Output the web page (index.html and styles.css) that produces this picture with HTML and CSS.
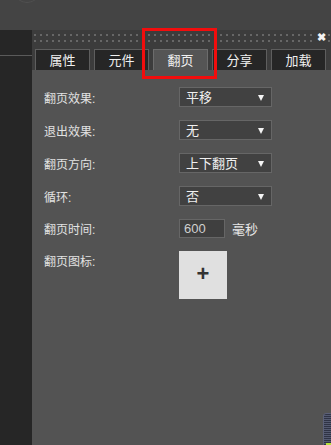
FILE: index.html
```html
<!DOCTYPE html>
<html lang="zh-CN">
<head>
  <meta charset="UTF-8">
  <title>翻页设置</title>
  <link rel="stylesheet" href="styles.css">
</head>
<body>
  <!-- 上部のツールバー -->
  <div class="topbar"><span class="knob"></span></div>

  <div class="main">
    <!-- 左のサイドバー -->
    <div class="sidebar"><div class="side-line"></div></div>

    <!-- 設定パネル -->
    <div class="panel">
      <div class="panel-head">
        <div class="dots"></div>
        <div class="dots"></div>
        <span class="close">✖</span>
      </div>

      <div class="tabs">
        <div class="tab">属性</div>
        <div class="tab">元件</div>
        <div class="tab active">翻页</div>
        <div class="tab">分享</div>
        <div class="tab">加载</div>
      </div>
      <div class="highlight"></div>

      <div class="form">
        <div class="row">
          <label>翻页效果:</label>
          <div class="select">平移</div>
        </div>
        <div class="row">
          <label>退出效果:</label>
          <div class="select">无</div>
        </div>
        <div class="row">
          <label>翻页方向:</label>
          <div class="select">上下翻页</div>
        </div>
        <div class="row">
          <label>循环:</label>
          <div class="select">否</div>
        </div>
        <div class="row">
          <label>翻页时间:</label>
          <div class="number">600</div>
          <span class="unit">毫秒</span>
        </div>
        <div class="row top">
          <label>翻页图标:</label>
          <div class="icon-box">+</div>
        </div>
      </div>
    </div>
  </div>

  <div class="mini-bar"></div>
</body>
</html>
```

FILE: styles.css
```css
/* 全体 */
body {
  margin: 0;
  width: 331px;
  height: 445px;
  overflow: hidden;
  background: #444444;
  font-family: "Liberation Sans", "Noto Sans CJK SC", sans-serif;
  color: #e2e2e2;
  position: relative;
}

/* 上部ツールバー */
.topbar {
  height: 30px;
  background: #444444;
  position: relative;
}

.knob {
  position: absolute;
  left: 16px;
  top: -16px;
  width: 22px;
  height: 18px;
  border-radius: 50%;
  border-bottom: 1px solid #515151;
}

.main {
  display: flex;
  height: 415px;
}

/* サイドバー */
.sidebar {
  width: 32px;
  background: #262626;
}

.side-line {
  margin-top: 25px;
  height: 1px;
  background: #5a5a5a;
}

/* パネル */
.panel {
  flex: 1;
  background: #535353;
  position: relative;
}

.panel-head {
  height: 15px;
  box-sizing: border-box;
  padding: 4px 0 0 2px;
  background: #3c3c3c;
  display: flex;
  flex-direction: column;
  gap: 4px;
  position: relative;
}

.dots {
  height: 2px;
  background-image: linear-gradient(90deg, #676767 0 2px, transparent 2px);
  background-size: 6px 2px;
}

.close {
  position: absolute;
  right: 4px;
  top: 1px;
  width: 12px;
  height: 13px;
  background: #3c3c3c;
  color: #f2f2f2;
  font-size: 11px;
  line-height: 13px;
  text-align: center;
  font-weight: bold;
}

/* タブ */
.tabs {
  display: flex;
  gap: 4px;
  padding: 4px 5px 0 3px;
  background: #3c3c3c;
  height: 21px;
}

.tab {
  width: 53px;
  height: 20px;
  border: 1px solid #5e5e5e;
  border-bottom: none;
  background: #262626;
  color: #f0f0f0;
  font-size: 13px;
  line-height: 21px;
  text-align: center;
}

.tab.active {
  background: #555555;
  border-color: #6c6c6c;
}

.highlight {
  position: absolute;
  left: 110px;
  top: -2px;
  width: 69px;
  height: 45px;
  border: 3px solid #f20d0d;
}

/* フォーム */
.form {
  padding: 17px 0 0 12px;
}

.row {
  display: flex;
  align-items: center;
  margin-bottom: 13px;
  font-size: 12px;
}

.row.top {
  align-items: flex-start;
  margin-bottom: 0;
}

.row.top label {
  margin-top: 1px;
}

.row label {
  width: 135px;
  color: #e2e2e2;
}

.select {
  width: 85px;
  height: 18px;
  padding-left: 6px;
  border: 1px solid #666666;
  background: #414141;
  color: #f0f0f0;
  font-size: 13px;
  line-height: 19px;
  position: relative;
}

.select::after {
  content: "";
  position: absolute;
  right: 7px;
  top: 7px;
  border-left: 3.5px solid transparent;
  border-right: 3.5px solid transparent;
  border-top: 6px solid #f4f4f4;
}

.number {
  width: 40px;
  height: 17px;
  padding-left: 4px;
  border: 1px solid #666666;
  background: #3f3f3f;
  color: #d0d0d0;
  font-size: 13px;
  line-height: 18px;
}

.unit {
  margin-left: 7px;
  font-size: 13px;
  color: #e6e6e6;
}

.icon-box {
  width: 48px;
  height: 48px;
  background: #e0e0e0;
  color: #333333;
  font-size: 22px;
  font-weight: bold;
  line-height: 46px;
  text-align: center;
}

/* 右下の小さなバー */
.mini-bar {
  position: absolute;
  left: 323px;
  top: 413px;
  width: 10px;
  height: 36px;
  border-radius: 3px;
  background: repeating-linear-gradient(#2f3345 0 1px, #545a70 1px 2px);
  border: 1px solid #5b6078;
  box-sizing: border-box;
}

.mini-bar::after {
  content: "";
  position: absolute;
  left: 2px;
  bottom: 2px;
  width: 5px;
  height: 3px;
  background: #b8e03a;
}
```
